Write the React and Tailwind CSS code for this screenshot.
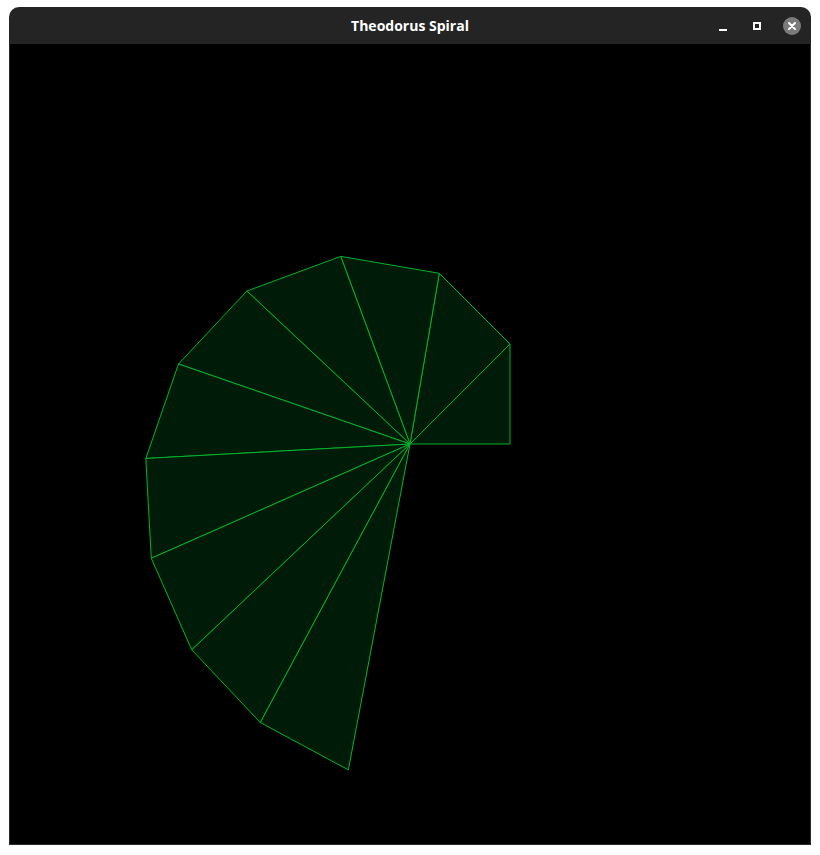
import React from 'react';

// Spiral of Theodorus: n right triangles, each with an outer leg of 1 unit
const UNIT = 100;
const COUNT = 10;

const buildTriangles = () => {
  const tris = [];
  let angle = 0;
  for (let n = 1; n <= COUNT; n++) {
    const r = Math.sqrt(n) * UNIT;
    const a = [400 + r * Math.cos(angle), 400 - r * Math.sin(angle)];
    angle += Math.atan(1 / Math.sqrt(n));
    const r2 = Math.sqrt(n + 1) * UNIT;
    const b = [400 + r2 * Math.cos(angle), 400 - r2 * Math.sin(angle)];
    tris.push([a, b]);
  }
  return tris;
};

const App = () => {
  const triangles = buildTriangles();

  return (
    <div className="w-[820px] h-[855px] bg-white pt-[7px] pl-[9px]">
      <div className="w-[802px] rounded-t-[10px] overflow-hidden bg-[#242424]">
        {/* Title bar */}
        <div className="relative h-[37px] flex items-center justify-center">
          <span className="text-white text-[14px] font-bold" style={{ fontFamily: '"Open Sans", "DejaVu Sans", sans-serif' }}>
            Theodorus Spiral
          </span>
          <div className="absolute right-[10px] top-0 h-full flex items-center gap-[18px]">
            <div className="w-4 h-4 flex items-end justify-center pb-[3px]">
              <div className="w-[8px] h-[2px] bg-white" />
            </div>
            <div className="w-4 h-4 flex items-center justify-center">
              <div className="w-[8px] h-[8px] border-2 border-white" />
            </div>
            <div className="w-[18px] h-[18px] rounded-full bg-[#7b7b7b] flex items-center justify-center">
              <svg width="10" height="10" viewBox="0 0 10 10">
                <path d="M2 2 L8 8 M8 2 L2 8" stroke="white" strokeWidth="2" strokeLinecap="round" />
              </svg>
            </div>
          </div>
        </div>
        {/* Canvas */}
        <div className="border border-t-0 border-[#2b2b2b] bg-black">
          <svg width="800" height="800" viewBox="0 0 800 800" className="block">
            {triangles.map(([a, b], i) => (
              <polygon
                key={i}
                points={`400,400 ${a[0]},${a[1]} ${b[0]},${b[1]}`}
                fill="#001c08"
                stroke="#00b32c"
                strokeWidth="1"
              />
            ))}
          </svg>
        </div>
      </div>
    </div>
  );
};

export default App;
